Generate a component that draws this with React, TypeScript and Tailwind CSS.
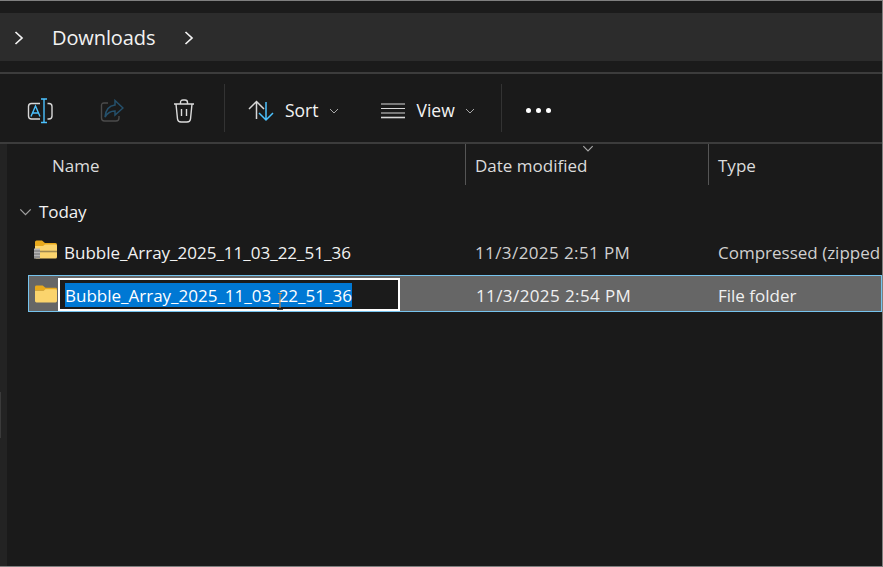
import React from "react";

const font = { fontFamily: '"Open Sans","Noto Sans",sans-serif' };

function Chevron({ className = "" }: { className?: string }) {
  return (
    <svg width="10" height="16" viewBox="0 0 10 16" fill="none" stroke="#f2f2f2" strokeWidth="1.7" className={className}>
      <path d="M1.5 2 L8 8 L1.5 14" />
    </svg>
  );
}

function Down({ color = "#a8a8a8", w = 10 }: { color?: string; w?: number }) {
  return (
    <svg width={w} height={Math.round(w * 0.6)} viewBox="0 0 10 6" fill="none" stroke={color} strokeWidth="1">
      <path d="M1 1 L5 5 L9 1" />
    </svg>
  );
}

function Rename() {
  return (
    <svg width="26" height="26" viewBox="0 0 26 26" fill="none">
      <path d="M13 5.500 H4.500 Q1.500 5.500 1.500 8.500 V18 Q1.500 21 4.500 21 H13" stroke="#d8d8d8" strokeWidth="1.4" />
      <path d="M20.500 5.500 H22 Q25 5.500 25 8.500 V18 Q25 21 22 21 H20.500" stroke="#d8d8d8" strokeWidth="1.4" />
      <path d="M14 1 H20 M17 1 V24.500 M14 24.500 H20" stroke="#4cc2ff" strokeWidth="1.4" />
      <path d="M4 18.500 L8.500 8 L13 18.500 M5.500 15 H11.500" stroke="#4cc2ff" strokeWidth="1.4" />
    </svg>
  );
}

function Share() {
  return (
    <svg width="24" height="24" viewBox="0 0 24 24" fill="none">
      <path d="M8 4 H4 Q1.500 4 1.500 6.500 V19 Q1.500 22 4.500 22 H16 Q19 22 19 19 V17" stroke="#4b4b4b" strokeWidth="1.4" />
      <path d="M15 1.500 L23 9 L15 16 V12 Q8.500 12 5 18 Q6 7 15 6 Z" stroke="#25506b" strokeWidth="1.5" />
    </svg>
  );
}

function Trash() {
  return (
    <svg width="22" height="24" viewBox="0 0 22 24" fill="none" stroke="#dcdcdc" strokeWidth="1.4">
      <path d="M1 5 H21 M7.500 5 V3.500 Q7.500 1 10 1 H12 Q14.500 1 14.500 3.500 V5" />
      <path d="M3 5 L4.500 20 Q4.800 23 8 23 H14 Q17.200 23 17.500 20 L19 5" />
      <path d="M8.500 10 V17 M13.500 10 V17" />
    </svg>
  );
}

function SortIcon() {
  return (
    <svg width="26" height="22" viewBox="0 0 26 22" fill="none" strokeWidth="1.5">
      <path d="M1 9 L8.500 1.500 L16 9 M8.500 2 V19" stroke="#d8d8d8" />
      <path d="M11 13 L18 20 L25 13 M18 2 V20" stroke="#4cc2ff" />
    </svg>
  );
}

function ViewIcon() {
  return (
    <svg width="24" height="16" viewBox="0 0 24 16" stroke="#d8d8d8" strokeWidth="1.200">
      <path d="M0 1 H24 M0 5.500 H24 M0 10 H24" />
      <path d="M0 14.500 H24" strokeWidth="1.600" />
    </svg>
  );
}

function Folder() {
  return (
    <svg width="22" height="18" viewBox="0 0 23 19" preserveAspectRatio="none">
      <path d="M0 2 Q0 0.500 1.500 0.500 H8 L11 3 H21.500 Q23 3 23 4.500 V6 H0 Z" fill="#e8a91c" />
      <path d="M0 6 L9 6 L11 4.500 H21.500 Q23 4.500 23 6 V17 Q23 18.500 21.500 18.500 H1.500 Q0 18.500 0 17 Z" fill="#fbd46d" />
    </svg>
  );
}

function ZipFolder() {
  return (
    <svg width="23" height="19" viewBox="0 0 23 19">
      <path d="M1 2 Q1 0.500 2.500 0.500 H8 L11 3 H21.500 Q23 3 23 4.500 V6 H1 Z" fill="#e8a91c" />
      <path d="M1 6 L9 6 L11 4.500 H21.500 Q23 4.500 23 6 V17 Q23 18.500 21.500 18.500 H2.500 Q1 18.500 1 17 Z" fill="#fbd46d" />
      <path d="M1 11.500 H23" stroke="#a08a50" strokeWidth="1.600" />
      <rect x="0" y="8.500" width="6" height="10" fill="#b5b5b5" />
      <path d="M0 11 H6 M0 14 H6 M0 17 H6" stroke="#6e6e6e" strokeWidth="1" />
    </svg>
  );
}

export default function App() {
  const name = "Bubble_Array_2025_11_03_22_51_36";
  return (
    <div style={font} className="relative flex h-[567px] w-[883px] flex-col overflow-hidden border-t border-b border-r border-[#7f7f7f] bg-[#1a1a1a] text-[#f2f2f2]">
      <div className="h-3 shrink-0 bg-[#1b1b1b]" />
      <div className="flex h-[48px] shrink-0 items-center bg-[#2c2c2c] pl-[14px] pt-[2px]">
        <Chevron />
        <span className="ml-[28px] text-[20px] tracking-[-0.1px]">Downloads</span>
        <Chevron className="ml-[29px]" />
      </div>
      <div className="h-[11px] shrink-0 bg-[#1b1b1b]" />
      <div className="h-[2px] shrink-0 bg-[#3c3c3c]" />

      <div className="flex h-[68px] shrink-0 items-center bg-[#1a1a1a] pt-[5px]">
        <div className="ml-[27px]"><Rename /></div>
        <div className="ml-[47px]"><Share /></div>
        <div className="ml-[49px]"><Trash /></div>
        <div className="ml-[29px] -mt-[5px] h-[48px] w-px bg-[#333333]" />
        <div className="ml-[23px]"><SortIcon /></div>
        <span className="ml-[11px] text-[17.500px]">Sort</span>
        <div className="ml-[10px]"><Down /></div>
        <div className="ml-[42px]"><ViewIcon /></div>
        <span className="ml-[12px] text-[17.500px]">View</span>
        <div className="ml-[10px]"><Down /></div>
        <div className="ml-[26px] -mt-[5px] h-[48px] w-px bg-[#333333]" />
        <div className="ml-[24px] flex gap-[5px]">
          <div className="size-[5px] rounded-full bg-white" />
          <div className="size-[5px] rounded-full bg-white" />
          <div className="size-[5px] rounded-full bg-white" />
        </div>
      </div>
      <div className="h-[2px] shrink-0 bg-[#3c3c3c]" />

      <div className="flex min-h-0 flex-1">
        <div className="flex w-[7px] shrink-0 flex-col bg-[#232323]">
          <div className="mt-[248px] h-[46px] w-px bg-[#3a3a3a]" />
        </div>
        <div className="flex min-w-0 flex-1 flex-col">
          <div className="flex h-[41px] shrink-0 text-[17px] text-[#dcdcdc]">
            <div className="w-[458px] shrink-0 pl-[45px] pt-[9px]">Name</div>
            <div className="relative w-[243px] shrink-0 border-l border-[#555555] pl-[9px] pt-[9px]">
              Date modified
              <div className="absolute left-[116px] top-[1px]"><Down w={12} /></div>
            </div>
            <div className="flex-1 whitespace-nowrap border-l border-[#555555] pl-[9px] pt-[9px]">Type</div>
          </div>
          <div className="flex h-[48px] shrink-0 items-center pl-[12px] pt-[6px]">
            <Down color="#a0a0a0" w={13} />
            <span className="ml-[7px] text-[17px] tracking-[-0.1px]">Today</span>
          </div>
          <div className="flex h-[41px] shrink-0 items-center pb-[2px] text-[17px]">
            <div className="flex w-[459px] shrink-0 items-center pl-[27px]">
              <div className="-mt-[6px]"><ZipFolder /></div>
              <span className="ml-[7px] text-[#f2f2f2]">{name}</span>
            </div>
            <div className="w-[243px] shrink-0 pl-[9px] tracking-[0.4px] text-[#d0d0d0]">11/3/2025 2:51 PM</div>
            <div className="min-w-0 flex-1 whitespace-nowrap pl-[9px] text-[#d0d0d0]">Compressed (zipped</div>
          </div>
          <div className="ml-[21px] mt-[1px] flex h-[37px] shrink-0 items-center border border-[#76c4ee] bg-[#666666] text-[17px]">
            <div className="relative flex h-[35px] w-[437px] shrink-0 items-center pl-[6px]">
              <Folder />
              <div className="ml-[1px] mt-[2px] flex h-[33px] w-[342px] shrink-0 items-center border-2 border-white bg-[#1b1b1b] pl-[5px]">
                <span className="h-[24px] bg-[#0078d4] leading-[26px] text-white">{name}</span>
              </div>
              <svg className="absolute left-[246px] top-[17px]" width="10" height="18" viewBox="0 0 10 18" fill="none">
                <path d="M5 0.500 V15" stroke="#e08a3c" strokeWidth="1" />
                <path d="M2 16 H8" stroke="#111111" strokeWidth="1.500" />
                <path d="M3 0.500 H7" stroke="#e08a3c" strokeWidth="1" />
              </svg>
            </div>
            <div className="w-[243px] shrink-0 pl-[10px] pt-[4px] tracking-[0.4px] text-[#f0f0f0]">11/3/2025 2:54 PM</div>
            <div className="pl-[9px] pt-[4px] text-[#f0f0f0]">File folder</div>
          </div>
        </div>
      </div>
    </div>
  );
}
